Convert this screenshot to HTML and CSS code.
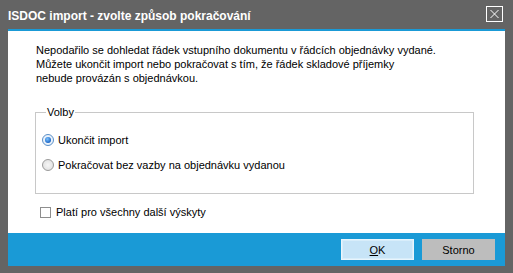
FILE: index.html
```html
<!DOCTYPE html>
<html lang="cs">
  <head>
    <meta charset="UTF-8" />
    <title>ISDOC import</title>
    <link rel="stylesheet" href="styles.css">
  </head>
  <body>
    <div class="window">
      <div class="title-bar">
        <span class="title">ISDOC import - zvolte způsob pokračování</span>
        <span class="close-btn">
          <svg width="15" height="14" viewBox="0 0 15 14">
            <path d="M3.5 3 L11.5 11 M11.5 3 L3.5 11" stroke="#fff" stroke-width="1" fill="none" />
          </svg>
        </span>
      </div>

      <div class="content">
        <p class="message">
          Nepodařilo se dohledat řádek vstupního dokumentu v řádcích objednávky vydané.<br />
          Můžete ukončit import nebo pokračovat s tím, že řádek skladové příjemky<br />
          nebude provázán s objednávkou.
        </p>

        <fieldset class="options">
          <legend>Volby</legend>
          <label class="option">
            <span class="radio checked"></span>
            Ukončit import
          </label>
          <label class="option">
            <span class="radio"></span>
            Pokračovat bez vazby na objednávku vydanou
          </label>
        </fieldset>

        <label class="check-row">
          <span class="checkbox"></span>
          Platí pro všechny další výskyty
        </label>
      </div>

      <div class="footer">
        <button class="btn btn-ok"><u>O</u>K</button>
        <button class="btn btn-cancel">Storno</button>
      </div>
    </div>
  </body>
</html>
```

FILE: styles.css
```css
:root {
  --frame: #646464;
  --accent: #1a9ad6;
  --text: #000;
  --line: #c8c8c8;
}

* {
  box-sizing: border-box;
  margin: 0;
  padding: 0;
}

body {
  font-family: "Liberation Sans", Arial, sans-serif;
  font-size: 11px;
  color: var(--text);
  background: #fff;
}

.window {
  width: 513px;
  height: 273px;
  background: var(--frame);
  padding: 0 8px 7px 8px;
  display: flex;
  flex-direction: column;
}

.title-bar {
  height: 29px;
  display: flex;
  align-items: center;
  justify-content: space-between;
}

.title {
  color: #fff;
  font-weight: 700;
  font-size: 12px;
  margin-top: 2px;
}

.close-btn {
  width: 17px;
  height: 16px;
  border: 1px solid #fff;
  display: flex;
  align-items: center;
  justify-content: center;
  margin-right: 2px;
  margin-top: -1px;
}

.content {
  flex: 1;
  background: #fff;
  border-top: 2px solid var(--accent);
  padding: 12px 31px 0 28px;
}

.message {
  line-height: 14px;
}

.options {
  margin: 21px 0 0 -1px;
  height: 88px;
  border: 1px solid var(--line);
  padding: 15px 0 0 6px;
}

.options legend {
  padding: 0 1px;
  margin-left: 4px;
  line-height: 12px;
}

.option {
  display: flex;
  align-items: center;
  gap: 4px;
  height: 13px;
  margin-bottom: 12px;
}

.radio {
  width: 12px;
  height: 12px;
  border-radius: 50%;
  border: 1px solid #9a9a9a;
  background: radial-gradient(circle, #f6f6f6 0, #dcdcdc 100%);
  position: relative;
}

.radio.checked {
  border-color: #5a8fc7;
  background: #eaf2fb;
}

.radio.checked::after {
  content: "";
  position: absolute;
  left: 2px;
  top: 2px;
  width: 6px;
  height: 6px;
  border-radius: 50%;
  background: radial-gradient(circle at 40% 35%, #7cc3ff 0, #1c67c7 70%, #0d3f8c 100%);
}

.check-row {
  display: flex;
  align-items: center;
  gap: 5px;
  margin-top: 12px;
  margin-left: 4px;
}

.checkbox {
  width: 11px;
  height: 11px;
  border: 1px solid #8e8e8e;
  background: #fff;
}

.footer {
  height: 33px;
  background: var(--accent);
  display: flex;
  align-items: center;
  justify-content: flex-end;
  gap: 8px;
  padding-right: 10px;
}

.btn {
  width: 73px;
  height: 21px;
  font-family: "Liberation Sans", Arial, sans-serif;
  font-size: 11px;
  color: #000;
  border: none;
}

.btn-ok {
  background: #c7e4f7;
  border: 1px solid #e8f5fd;
  box-shadow: inset 0 0 0 1px #d8edfa;
}

.btn-cancel {
  background: #bdbdbd;
}
```
